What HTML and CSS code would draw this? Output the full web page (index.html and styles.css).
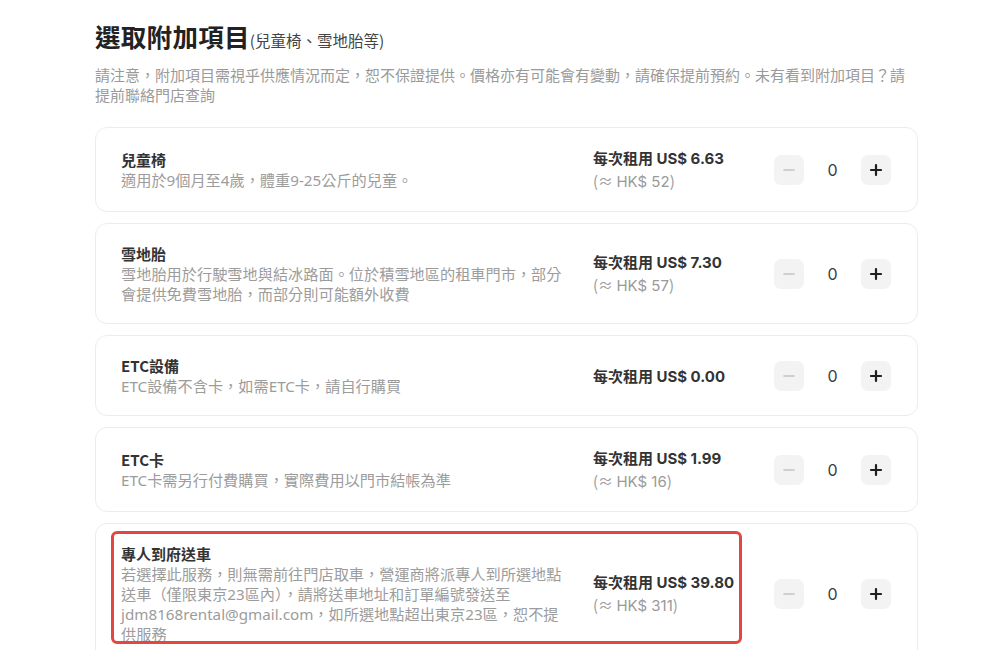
FILE: index.html
```html
<!DOCTYPE html>
<html lang="zh-Hant">
<head>
<meta charset="utf-8">
<title>選取附加項目</title>
<link rel="stylesheet" href="styles.css">
</head>
<body>
<main class="addons">
  <h1 class="addons-title">選取附加項目<span class="addons-sub">(兒童椅、雪地胎等)</span></h1>
  <p class="addons-notice">請注意，附加項目需視乎供應情況而定，恕不保證提供。價格亦有可能會有變動，請確保提前預約。未有看到附加項目？請提前聯絡門店查詢</p>

  <ul class="addon-list">
    <li class="addon-card">
      <div class="addon-info">
        <div class="addon-name">兒童椅</div>
        <div class="addon-desc">適用於9個月至4歲，體重9-25公斤的兒童。</div>
      </div>
      <div class="addon-price">
        <div class="price-main">每次租用 <span class="num">US$ 6.63</span></div>
        <div class="price-sub">(≈ <span class="num">HK$ 52</span>)</div>
      </div>
      <div class="stepper">
        <button class="step-btn minus" type="button" aria-label="減少"><svg viewBox="0 0 14 14" width="14" height="14"><path d="M2 7h10" /></svg></button>
        <span class="step-count">0</span>
        <button class="step-btn plus" type="button" aria-label="增加"><svg viewBox="0 0 14 14" width="14" height="14"><path d="M2 7h10M7 2v10" /></svg></button>
      </div>
    </li>

    <li class="addon-card">
      <div class="addon-info">
        <div class="addon-name">雪地胎</div>
        <div class="addon-desc">雪地胎用於行駛雪地與結冰路面。位於積雪地區的租車門市，部分會提供免費雪地胎，而部分則可能額外收費</div>
      </div>
      <div class="addon-price">
        <div class="price-main">每次租用 <span class="num">US$ 7.30</span></div>
        <div class="price-sub">(≈ <span class="num">HK$ 57</span>)</div>
      </div>
      <div class="stepper">
        <button class="step-btn minus" type="button" aria-label="減少"><svg viewBox="0 0 14 14" width="14" height="14"><path d="M2 7h10" /></svg></button>
        <span class="step-count">0</span>
        <button class="step-btn plus" type="button" aria-label="增加"><svg viewBox="0 0 14 14" width="14" height="14"><path d="M2 7h10M7 2v10" /></svg></button>
      </div>
    </li>

    <li class="addon-card">
      <div class="addon-info">
        <div class="addon-name">ETC設備</div>
        <div class="addon-desc">ETC設備不含卡，如需ETC卡，請自行購買</div>
      </div>
      <div class="addon-price">
        <div class="price-main">每次租用 <span class="num">US$ 0.00</span></div>
      </div>
      <div class="stepper">
        <button class="step-btn minus" type="button" aria-label="減少"><svg viewBox="0 0 14 14" width="14" height="14"><path d="M2 7h10" /></svg></button>
        <span class="step-count">0</span>
        <button class="step-btn plus" type="button" aria-label="增加"><svg viewBox="0 0 14 14" width="14" height="14"><path d="M2 7h10M7 2v10" /></svg></button>
      </div>
    </li>

    <li class="addon-card">
      <div class="addon-info">
        <div class="addon-name">ETC卡</div>
        <div class="addon-desc">ETC卡需另行付費購買，實際費用以門市結帳為準</div>
      </div>
      <div class="addon-price">
        <div class="price-main">每次租用 <span class="num">US$ 1.99</span></div>
        <div class="price-sub">(≈ <span class="num">HK$ 16</span>)</div>
      </div>
      <div class="stepper">
        <button class="step-btn minus" type="button" aria-label="減少"><svg viewBox="0 0 14 14" width="14" height="14"><path d="M2 7h10" /></svg></button>
        <span class="step-count">0</span>
        <button class="step-btn plus" type="button" aria-label="增加"><svg viewBox="0 0 14 14" width="14" height="14"><path d="M2 7h10M7 2v10" /></svg></button>
      </div>
    </li>

    <li class="addon-card addon-card--highlight">
      <div class="highlight-frame" aria-hidden="true"></div>
      <div class="addon-info">
        <div class="addon-name">專人到府送車</div>
        <div class="addon-desc">若選擇此服務，則無需前往門店取車，營運商將派專人到所選地點送車（僅限東京23區內），請將送車地址和訂單編號發送至 jdm8168rental@gmail.com，如所選地點超出東京23區，恕不提供服務</div>
      </div>
      <div class="addon-price">
        <div class="price-main">每次租用 <span class="num">US$ 39.80</span></div>
        <div class="price-sub">(≈ <span class="num">HK$ 311</span>)</div>
      </div>
      <div class="stepper">
        <button class="step-btn minus" type="button" aria-label="減少"><svg viewBox="0 0 14 14" width="14" height="14"><path d="M2 7h10" /></svg></button>
        <span class="step-count">0</span>
        <button class="step-btn plus" type="button" aria-label="增加"><svg viewBox="0 0 14 14" width="14" height="14"><path d="M2 7h10M7 2v10" /></svg></button>
      </div>
    </li>
  </ul>
</main>
</body>
</html>
```

FILE: styles.css
```css
* { box-sizing: border-box; }

html, body {
  margin: 0;
  padding: 0;
  background: #ffffff;
}

body {
  font-family: "Noto Sans", "Noto Sans CJK TC", sans-serif;
  color: #333333;
  overflow: hidden;
}

.addons {
  width: 823px;
  margin-left: 95px;
  padding-top: 18px;
}

.addons-title {
  margin: 0;
  font-family: "Noto Sans CJK TC", sans-serif;
  font-size: 25.5px;
  line-height: 36px;
  font-weight: 700;
  color: #222222;
  letter-spacing: 0.3px;
}

.addons-sub {
  font-size: 15.5px;
  font-weight: 400;
  color: #444444;
  letter-spacing: 0;
}

.addons-notice {
  margin: 7px 0 0;
  font-family: "Noto Sans CJK TC", sans-serif;
  font-size: 15px;
  line-height: 20px;
  color: #9a9a9a;
}

.addon-list {
  list-style: none;
  margin: 22px 0 0;
  padding: 0;
  display: flex;
  flex-direction: column;
  gap: 11px;
}

.addon-card {
  position: relative;
  display: flex;
  align-items: center;
  padding: 19px 26px 19px 25px;
  border: 1px solid #ececec;
  border-radius: 12px;
  background: #ffffff;
}

.addon-info {
  width: 443px;
  flex: none;
  font-family: "Noto Sans", "Noto Sans CJK TC", sans-serif;
}

.addon-name {
  font-family: "Noto Sans CJK TC", sans-serif;
  font-size: 15px;
  line-height: 21px;
  font-weight: 700;
  color: #333333;
}

.addon-desc {
  font-size: 15.2px;
  line-height: 20px;
  color: #9c9c9c;
}

.addon-price {
  margin-left: 29px;
  width: 180px;
  flex: none;
  font-family: "Noto Sans CJK TC", sans-serif;
}

.price-main {
  font-size: 15px;
  line-height: 21px;
  font-weight: 700;
  color: #333333;
}

.price-main .num {
  font-family: "Inter", sans-serif;
  font-weight: 700;
}

.price-sub {
  font-size: 15px;
  line-height: 21px;
  margin-top: 1px;
  color: #9a9a9a;
}

.price-sub .num {
  font-family: "Inter", sans-serif;
}

.stepper {
  display: flex;
  align-items: center;
  margin-left: auto;
}

.step-btn {
  width: 30px;
  height: 30px;
  border: none;
  border-radius: 7px;
  background: #f3f3f3;
  padding: 0;
  display: flex;
  align-items: center;
  justify-content: center;
  cursor: pointer;
}

.step-btn svg {
  fill: none;
  stroke-linecap: round;
}

.step-btn.minus svg { stroke: #c4c4c4; stroke-width: 1.6; }
.step-btn.plus svg { stroke: #1f1f1f; stroke-width: 2.2; }

.step-count {
  width: 57px;
  text-align: center;
  font-family: "Inter", sans-serif;
  font-size: 16px;
  color: #3a3d46;
}

.highlight-frame {
  position: absolute;
  left: 15px;
  top: 7px;
  width: 631px;
  height: 113px;
  border: 3px solid #e2483f;
  border-radius: 6px;
  pointer-events: none;
}
```
